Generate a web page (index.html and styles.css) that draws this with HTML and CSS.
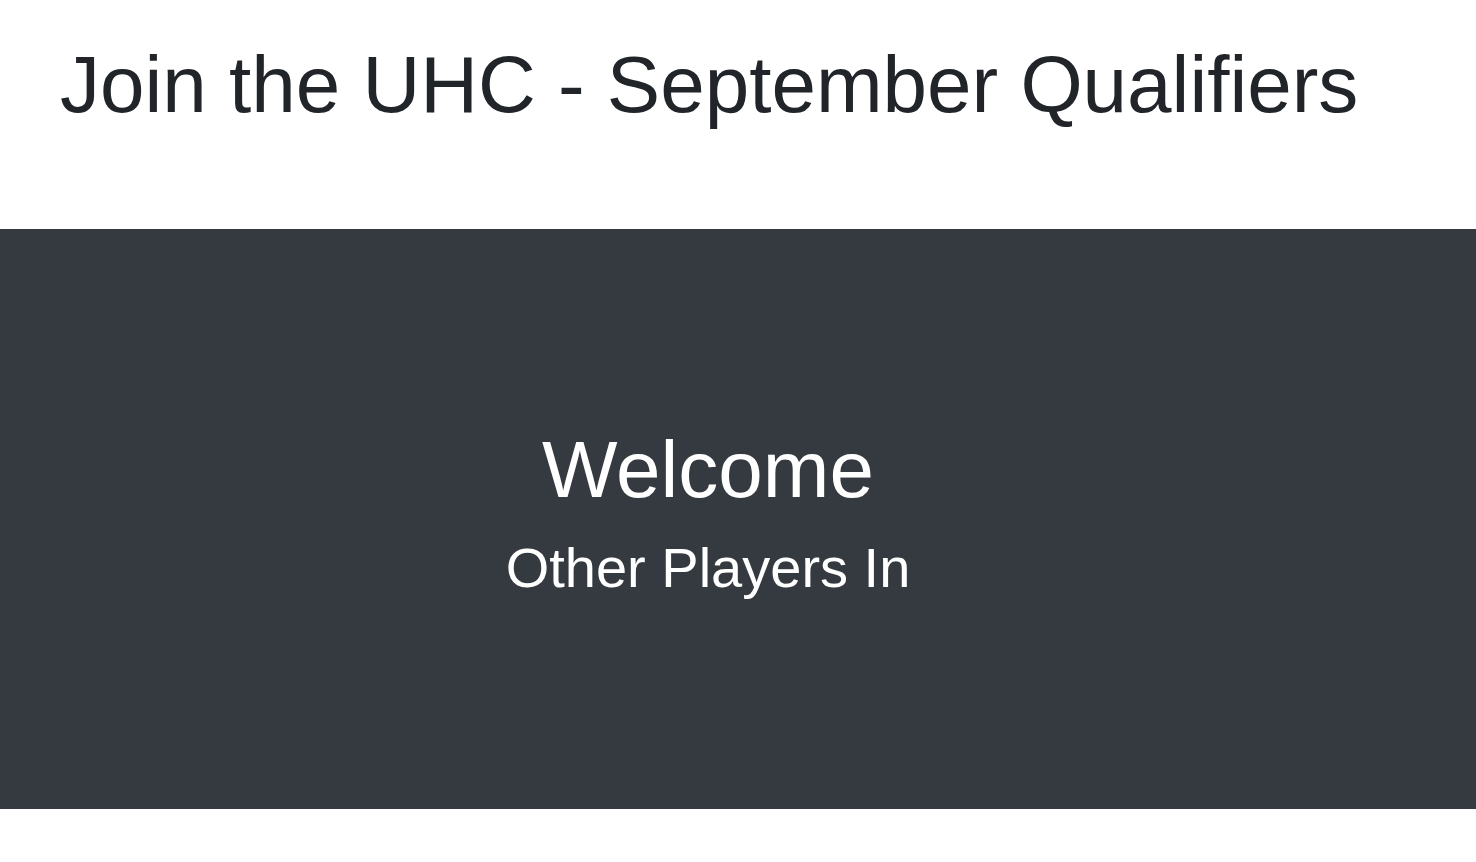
FILE: index.html
```html
<!DOCTYPE html>
<html>
<head>
<meta charset="utf-8">
<link rel="stylesheet" href="styles.css">
</head>
<body>
<header class="page-header">
  <h1 class="title">Join the UHC - September Qualifiers</h1>
</header>
<section class="hero">
  <div class="hero-inner">
    <h2 class="hero-title">Welcome</h2>
    <p class="hero-lead">Other Players In</p>
  </div>
</section>
</body>
</html>
```

FILE: styles.css
```css
html, body {
  margin: 0;
  padding: 0;
  background: #ffffff;
  font-family: "Liberation Sans", Arial, sans-serif;
  color: #212529;
}

.page-header {
  padding: 37px 60px 0 60px;
  height: 229px;
  box-sizing: border-box;
}

.title {
  margin: 0;
  font-size: 80px;
  font-weight: 400;
  line-height: 96px;
}

.hero {
  background: #343a40;
  color: #ffffff;
  padding: 193px 60px 0 0;
  height: 580px;
  box-sizing: border-box;
}

.hero-inner {
  text-align: center;
}

.hero-title {
  margin: 0;
  font-size: 80px;
  font-weight: 400;
  line-height: 96px;
}

.hero-lead {
  margin: 9px 0 0 0;
  font-size: 56px;
  font-weight: 400;
  line-height: 82.5px;
}
```
